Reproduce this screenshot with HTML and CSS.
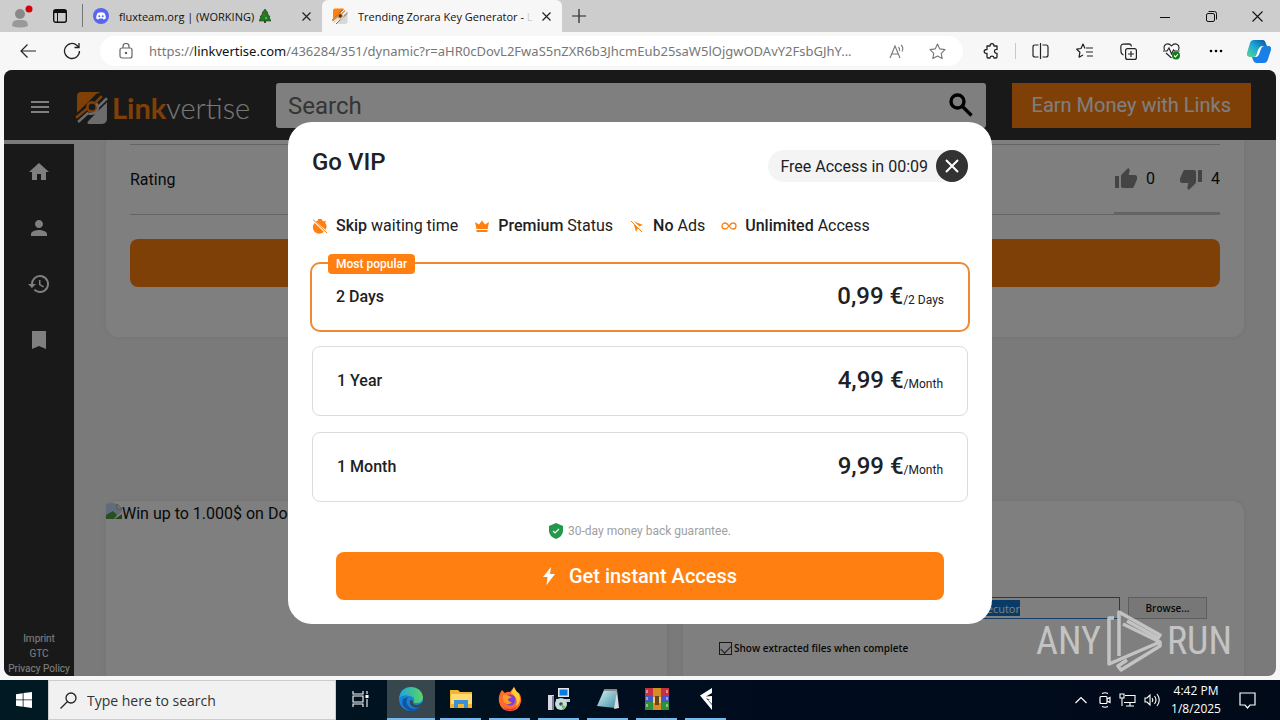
FILE: index.html
```html
<!DOCTYPE html>
<html lang="en">
<head>
<meta charset="utf-8">
<title>Trending Zorara Key Generator</title>
<link rel="stylesheet" href="styles.css">
</head>
<body>
<header class="tabs">
  <button class="profile" aria-label="Profile"><svg width="22" height="24" viewBox="0 0 22 24"><circle cx="8" cy="10" r="5" fill="#888"/><path d="M0 22q0-6 5-6h6q5 0 5 6-8 3-16 0z" fill="#999"/><circle cx="17" cy="5" r="3.500" fill="#d4000c"/></svg></button>
  <button class="actions" aria-label="Tab actions"><svg width="14" height="14" viewBox="0 0 14 14"><rect x=".7" y=".7" width="12.600" height="12.600" rx="2" fill="none" stroke="#111" stroke-width="1.400"/><path d="M1 1h12v3H5v9H4V4H1z" fill="#111"/></svg></button>
  <div class="tab">
    <svg width="16" height="16" viewBox="0 0 16 16"><circle cx="8" cy="8" r="8" fill="#5865f2"/><path d="M4.500 5q3.500-1.500 7 0 1.500 3 1.300 5.500-1.300 1-2.400 1l-.6-1H6.200l-.6 1q-1.100 0-2.400-1Q3 8 4.500 5z" fill="#fff"/><circle cx="6.300" cy="8.300" r="1" fill="#5865f2"/><circle cx="9.700" cy="8.300" r="1" fill="#5865f2"/></svg>
    <span class="tab-title">fluxteam.org | (WORKING)</span>
    <svg class="tree" width="12" height="14" viewBox="0 0 12 14"><path d="M6 0l3 4-1 0 3 4-1 0 2 4H0l2-4H1l3-4H3z" fill="#1d7a26" stroke="#103d12" stroke-width=".6"/><path d="M5 12h2v2H5z" fill="#633"/><circle cx="5" cy="6" r=".8" fill="#e33"/><circle cx="7" cy="9" r=".8" fill="#fd3"/></svg>
    <button class="close" aria-label="Close tab"><svg width="9" height="9" viewBox="0 0 9 9"><path d="M.5.5l8 8m0-8l-8 8" stroke="#222" stroke-width="1.200"/></svg></button>
  </div>
  <div class="tab active">
    <svg width="16" height="16" viewBox="0 0 32 32"><use href="#mark"/></svg>
    <span class="tab-title">Trending Zorara Key Generator - <i>L</i></span>
    <button class="close" aria-label="Close tab"><svg width="9" height="9" viewBox="0 0 9 9"><path d="M.5.5l8 8m0-8l-8 8" stroke="#222" stroke-width="1.200"/></svg></button>
  </div>
  <button class="new" aria-label="New tab"><svg width="14" height="14" viewBox="0 0 14 14"><path d="M7 0v14M0 7h14" stroke="#222" stroke-width="1.200"/></svg></button>
  <div class="window">
    <button aria-label="Minimize"><svg width="11" height="11"><path d="M0 6.500h10" stroke="#111"/></svg></button>
    <button aria-label="Restore"><svg width="11" height="11" viewBox="0 0 11 11" fill="none" stroke="#111"><rect x=".5" y="2.500" width="8" height="8" rx="1.500"/><path d="M2.500.5h6q2 0 2 2v6"/></svg></button>
    <button aria-label="Close"><svg width="11" height="11" viewBox="0 0 11 11"><path d="M.5.5l10 10m0-10l-10 10" stroke="#111" stroke-width="1.100"/></svg></button>
  </div>
</header>

<svg class="defs" width="0" height="0" aria-hidden="true">
  <symbol id="mark" viewBox="0 0 32 32">
    <path d="M6 1h18L2 21V5q0-4 4-4z" fill="#ff8011"/>
    <path d="M31 10v17q0 5-5 5H13q-2-1 0-3z" fill="#d8d8d8"/>
    <path d="M0 25L22 3" stroke="#333" stroke-width="2"/>
    <path d="M1 26L13 16M20 11l6-6" stroke="#ff8011" stroke-width="2.500"/>
    <path d="M3 30l10-9M21 17L31 7" stroke="#d8d8d8" stroke-width="2.500"/>
    <path d="M8 32L31 10" stroke="#333" stroke-width="1.500"/>
    <circle cx="16.500" cy="15.500" r="4.500" fill="#333" stroke="#ff8011" stroke-width="2.500"/>
    <path d="M13 22q7 1 9-4 1-3-1-6" fill="none" stroke="#d8d8d8" stroke-width="2.200"/>
  </symbol>
</svg>

<nav class="toolbar">
  <button aria-label="Back"><svg width="16" height="14" viewBox="0 0 16 14" fill="none" stroke="#222" stroke-width="1.200"><path d="M16 7H1M7.500.5L1 7l6.500 6.500"/></svg></button>
  <button aria-label="Refresh"><svg width="18" height="18" viewBox="0 0 18 18" fill="none" stroke="#222" stroke-width="1.300"><path d="M16.500 9A7.500 7.500 0 1 1 14 3.400L16 5.500M16 1v4.500h-4.500"/></svg></button>
  <div class="address">
    <svg width="14" height="16" viewBox="0 0 14 16" fill="none" stroke="#666" stroke-width="1.200"><rect x="1" y="5" width="12" height="10" rx="2"/><path d="M4 5V3.500a3 3 0 0 1 6 0V5"/><circle cx="7" cy="10" r=".7" fill="#666"/></svg>
    <span class="url">https://<b>linkvertise.com</b>/436284/351/dynamic?r=aHR0cDovL2FwaS5nZXR6b3JhcmEub25saW5lOjgwODAvY2FsbGJhY...</span>
    <button aria-label="Read aloud"><svg width="17" height="15" viewBox="0 0 17 15" fill="none" stroke="#777" stroke-width="1.100"><path d="M1 14L6 2l5 12M3 10h6M9.500 3q1.500 1.500.8 4M12 1q3 2.500 1 6.500"/></svg></button>
    <button aria-label="Favorite"><svg width="17" height="17" viewBox="0 0 17 17" fill="none" stroke="#777" stroke-width="1.100" stroke-linejoin="round"><path d="M8.500 1l2.300 4.900 5.200.7-3.800 3.700 1 5.300-4.700-2.600-4.700 2.600 1-5.300L1 6.600l5.200-.7z"/></svg></button>
  </div>
  <button class="ext" aria-label="Extensions"><svg width="17" height="17" viewBox="0 0 17 17" fill="none" stroke="#222" stroke-width="1.300" stroke-linejoin="round"><path d="M4 3h3q0-2.300 2-2.300T11 3h3v3.500q-2.500-.3-2.500 1.800t2.500 2V14q0 1-1 1h-2q-.3-1.800-2-1.800T7 15H5q-1 0-1-1v-3.500q-2.800 0-2.800-2T4 6.500z"/></svg></button>
  <span class="rule"></span>
  <button aria-label="Split screen"><svg width="17" height="16" viewBox="0 0 17 16" fill="none" stroke="#222" stroke-width="1.200"><path d="M6.500 2H3Q1 2 1 4v8q0 2 2 2h3.500M8.500 0v16M10.500 2H14q2 0 2 2v8q0 2-2 2h-3.500"/></svg></button>
  <button aria-label="Favorites list"><svg width="17" height="16" viewBox="0 0 17 16" fill="none" stroke="#222" stroke-width="1.200" stroke-linejoin="round"><path d="M9 5.500L7 1 5 5.500l-4.300.7 3.200 3-.8 5L7 12M10 5h7M10 9h7M11 13h6"/></svg></button>
  <button aria-label="Collections"><svg width="17" height="17" viewBox="0 0 17 17" fill="none" stroke="#222" stroke-width="1.200"><rect x="5.600" y="5.600" width="10.800" height="10.800" rx="2"/><path d="M11 8v6M8 11h6M3.500 12Q1 11 1 8.500L.8 3.500Q1 1.500 3 1.200L9 .8q2 0 2.500 2.500"/></svg></button>
  <button aria-label="Browser essentials"><svg width="18" height="17" viewBox="0 0 18 17" fill="none" stroke="#222" stroke-width="1.100"><path d="M1.500 7Q0 3 3 1.300 6 0 8.500 3 11 0 14 1.300q3 1.700 1.500 5.700M0 8h4l2-3 2.500 6 2-4 1 1h5M3 10l5.500 5"/><circle cx="13" cy="12.500" r="4" fill="#127a1a" stroke="none"/><path d="M11 12.500l1.500 1.500 2.500-3" stroke="#fff"/></svg></button>
  <button aria-label="Settings"><svg width="14" height="4"><circle cx="2" cy="2" r="1.300"/><circle cx="7" cy="2" r="1.300"/><circle cx="12" cy="2" r="1.300"/></svg></button>
  <button class="copilot" aria-label="Copilot"><svg width="24" height="23" viewBox="0 0 24 23"><defs><linearGradient id="c1" x1="0" y1="1" x2="1" y2="0"><stop stop-color="#61d58c"/><stop offset=".5" stop-color="#1aa8d8"/><stop offset="1" stop-color="#0a4f9c"/></linearGradient><linearGradient id="c2" x1="0" y1="1" x2="1" y2="0"><stop stop-color="#1b7ff0"/><stop offset="1" stop-color="#1a7fe0"/></linearGradient></defs><path d="M7 0h9q2 0 3 4l1 2h-5q-2 0-3 3l-2 5q-1 3-4 3H3q-4 0-3-4L3 3q1-3 4-3z" fill="url(#c1)"/><path d="M17 6h4q4 0 3 4l-3 9q-1 4-4 4H9q-2 0-3-3l-1-3h3q3 0 4-3l2-5q1-3 3-3z" fill="url(#c2)"/><path d="M14 7l-2 7q-1 3-3 3l2-7q1-3 3-3z" fill="#fff"/></svg></button>
</nav>

<div class="frame">
<div class="site">
  <header class="site-head">
    <button class="menu" aria-label="Menu"><svg width="18" height="12" viewBox="0 0 18 12"><path d="M0 1h18M0 6h18M0 11h18" stroke="#fff" stroke-width="2"/></svg></button>
    <a class="logo" href="#"><svg width="33" height="33" viewBox="0 0 32 32"><use href="#mark"/></svg><span><b>Link</b>vertise</span></a>
    <form class="search"><input type="text" placeholder="Search" aria-label="Search"><button type="button" aria-label="Search"><svg width="24" height="24" viewBox="0 0 24 24" fill="none" stroke="#000" stroke-width="3.400"><circle cx="8.500" cy="8.500" r="6.500"/><path d="M13 13l9.500 9.500"/></svg></button></form>
    <button class="earn">Earn Money with Links</button>
  </header>
  <div class="site-body">
    <aside class="side">
      <a href="#" aria-label="Home"><svg viewBox="0 0 24 24"><path d="M10 20v-6h4v6h5v-8h3L12 3 2 12h3v8z"/></svg></a>
      <a href="#" aria-label="Account"><svg viewBox="0 0 24 24"><path d="M12 12c2.210 0 4-1.790 4-4s-1.790-4-4-4-4 1.790-4 4 1.790 4 4 4zm0 2c-2.670 0-8 1.340-8 4v2h16v-2c0-2.660-5.330-4-8-4z"/></svg></a>
      <a href="#" aria-label="History"><svg viewBox="0 0 24 24"><path d="M13 3a9 9 0 0 0-9 9H1l3.890 3.890.07.14L9 12H6a7 7 0 1 1 2.060 4.940l-1.420 1.420A9 9 0 1 0 13 3zm-1 5v5l4.280 2.540.72-1.210-3.500-2.080V8z"/></svg></a>
      <a href="#" aria-label="Bookmarks"><svg viewBox="0 0 24 24"><path d="M5 3h14v18l-7-3-7 3z"/></svg></a>
      <div class="legal"><a href="#">Imprint</a><a href="#">GTC</a><a href="#">Privacy Policy</a></div>
    </aside>
    <main class="main">
      <section class="card rating-card">
        <div class="rating"><span>Rating</span>
          <div class="votes">
            <button><svg viewBox="0 0 24 24"><path d="M1 21h4V9H1v12zm22-11c0-1.100-.9-2-2-2h-6.310l.95-4.570.03-.32c0-.41-.17-.79-.44-1.060L14.170 1 7.590 7.590C7.220 7.950 7 8.450 7 9v10c0 1.100.9 2 2 2h9c.83 0 1.540-.5 1.840-1.220l3.020-7.050c.09-.23.14-.47.14-.73v-2z"/></svg>0</button>
            <button><svg viewBox="0 0 24 24"><path d="M15 3H6c-.83 0-1.540.5-1.840 1.220l-3.020 7.050c-.09.23-.14.47-.14.73v2c0 1.100.9 2 2 2h6.310l-.95 4.570-.03.32c0 .41.17.79.44 1.060L9.830 23l6.590-6.590c.36-.36.58-.86.58-1.410V5c0-1.100-.9-2-2-2zm4 0v12h4V3h-4z"/></svg>4</button>
          </div>
        </div>
        <button class="wide" aria-label="Continue"></button>
      </section>
      <div class="ads">
        <section class="card ad"><svg width="16" height="16" viewBox="0 0 16 16"><path d="M0 1q6-2 11 0l5 5v3l-4 3-4 4H0z" fill="#c3d9f5"/><path d="M0 12l7-4 4 4-3 4H0z" fill="#4ea03c"/><path d="M11 1v5h5z" fill="#eee" stroke="#888" stroke-width=".6"/><path d="M9 16l7-5v5z" fill="#3a9134"/></svg><span>Win up to 1.000$ on Do</span></section>
        <section class="card extract">
          <div class="path"><div class="path-box"><input type="text" value="Zorara Executor" aria-label="Destination"></div><button>Browse...</button></div>
          <label class="check"><input type="checkbox" checked><span>Show extracted files when complete</span></label>
        </section>
      </div>
    </main>
  </div>

  <div class="overlay">
    <div class="modal" role="dialog" aria-labelledby="vip">
      <div class="modal-head"><h1 id="vip">Go VIP</h1>
        <div class="timer"><span>Free Access in 00:09</span><button aria-label="Close"><svg width="14" height="14" viewBox="0 0 14 14"><path d="M1 1l12 12M13 1L1 13" stroke="#fff" stroke-width="2"/></svg></button></div>
      </div>
      <ul class="perks">
        <li><svg viewBox="0 0 16 16"><path d="M6 1h4v1.500H6zM3.800 3.600a6 6 0 0 1 8.400 0l1-1 .8.900-1 1a6 6 0 0 1 .5 7.200zM2.600 5a6 6 0 0 0 9.200 8.800z"/><path d="M1 1.500L15 15" stroke="#ff8011"/></svg><span><b>Skip</b> waiting time</span></li>
        <li><svg viewBox="0 0 16 16"><path d="M1 4l4 2.500L8 2.500l3 4L15 4l-1.300 7H2.500zM2.500 12h11v2h-11z"/></svg><span><b>Premium</b> Status</span></li>
        <li><svg viewBox="0 0 16 16"><path d="M4 3l10 4-4 1.500 3 3-1 1-3-2.500L7 14z"/><path d="M2 2l12 11" stroke="#fff" stroke-width="2"/><path d="M2 3l11 11" stroke="#ff8011"/></svg><span><b>No</b> Ads</span></li>
        <li><svg viewBox="0 0 16 16" fill="none" stroke="#ff8011" stroke-width="1.300"><path d="M8 8Q6 5 4 5a3 3 0 0 0 0 6q2 0 4-3t4-3a3 3 0 0 1 0 6q-2 0-4-3z"/></svg><span><b>Unlimited</b> Access</span></li>
      </ul>
      <div class="plans">
        <button class="plan popular"><em>Most popular</em><span>2 Days</span><span class="price"><strong>0,99 €</strong>/2 Days</span></button>
        <button class="plan"><span>1 Year</span><span class="price"><strong>4,99 €</strong>/Month</span></button>
        <button class="plan"><span>1 Month</span><span class="price"><strong>9,99 €</strong>/Month</span></button>
      </div>
      <p class="guarantee"><svg width="14" height="16" viewBox="0 0 14 16"><path d="M7 0l7 3v5q0 5-7 8-7-3-7-8V3z" fill="#23984b"/><path d="M4 8l2 2 4-4" fill="none" stroke="#fff" stroke-width="1.200"/></svg>30-day money back guarantee.</p>
      <button class="get"><svg width="12" height="18" viewBox="0 0 12 18"><path d="M8 0L0 10h4.500L3.500 18 12 7H7z" fill="#fff"/></svg>Get instant Access</button>
    </div>
  </div>

  <div class="watermark"><span>ANY</span><svg width="56" height="62" viewBox="0 0 56 62" fill="none" stroke="#d0d0d0" stroke-width="3.500" stroke-linejoin="round"><path d="M13 46V2l41 23-2 3-31-17"/><path d="M8 8H3v46l51-22-37-18M54 32v4L15 60l-3-4 9-6"/></svg><span>RUN</span></div>
</div>
</div>

<footer class="taskbar">
  <button class="start" aria-label="Start"><svg width="16" height="16" viewBox="0 0 16 16" fill="#fff"><path d="M0 2.200L6.700 1.200V7.500H0zM7.500 1.100L16 0v7.500H7.500zM0 8.300h6.700v6.400L0 13.800zM7.500 8.300H16V16l-8.500-1.200z"/></svg></button>
  <label class="find"><svg width="17" height="17" viewBox="0 0 17 17" fill="none" stroke="#222" stroke-width="1.300"><circle cx="11" cy="6" r="5"/><path d="M7.500 9.500L.5 16.500"/></svg><input type="text" placeholder="Type here to search" aria-label="Type here to search"></label>
  <button class="task view" aria-label="Task view"><svg width="17" height="16" viewBox="0 0 17 16" fill="none" stroke="#fff" stroke-width="1.100"><path d="M1 0v3h10V0M1 16v-3h10v3M1 5h10v6H1zM15 0v3M15 8v8"/><path d="M13.500 4h3v3h-3z" fill="#fff" stroke="none"/></svg></button>
  <button class="task on" aria-label="Edge"><svg width="24" height="24" viewBox="0 0 24 24"><defs><linearGradient id="e1"><stop stop-color="#1da5df"/><stop offset="1" stop-color="#5bd65f"/></linearGradient></defs><circle cx="12" cy="12" r="12" fill="#1683d8"/><path d="M0 11Q2 0 12 0t12 10q0 6-7 6-3 0-2-2 1-4-4-5-7-2-11 2z" fill="url(#e1)"/><path d="M9 10q-4 7 3 11 5 2 10-2-4 6-11 5Q1 20 4 12z" fill="#1255a4"/><path d="M14 14q-1 4 4 4 3 0 6-3l-1 4q-5 3-9 1-4-2-3-7z" fill="#37474d"/></svg></button>
  <button class="task run" aria-label="File Explorer"><svg width="22" height="20" viewBox="0 0 22 20"><path d="M0 1h8l2 2h12v16H0z" fill="#f1b52f"/><path d="M1 5h21v10H1z" fill="#ffdc72"/><path d="M4 11h14v8h-4v-4H8v4H4z" fill="#3b91d4"/></svg></button>
  <button class="task run" aria-label="Firefox"><svg width="24" height="24" viewBox="0 0 24 24"><path d="M4 3l3 3q3-2 5-1l4-5q2 5 5 6 3 4 2 9-2 9-11 9T1 15Q0 8 4 3z" fill="#ff6a2b"/><path d="M16 0q2 5 5 7 3 8-3 12 3-9-5-13z" fill="#ffcf35"/><path d="M3 17q5 8 16 3-4 5-11 3z" fill="#f0265b"/><circle cx="12" cy="13" r="5.500" fill="#7543d9"/><path d="M5 8q3-1 6 1l3 1-4 2q0 3 4 3-3 4-7 1-3-3-2-8z" fill="#ff9a24"/></svg></button>
  <button class="task run" aria-label="Installer"><svg width="22" height="24" viewBox="0 0 22 24"><rect x="10" y="1" width="11" height="9" fill="#dfe6ee"/><rect x="11.500" y="2.500" width="8" height="6" fill="#087ae0"/><path d="M8 12h14v3H8z" fill="#ccc"/><path d="M0 8h6v15H0z" fill="#d8d8e2"/><path d="M4 9h2v14H4z" fill="#7e7e9a"/><circle cx="13" cy="17" r="6" fill="#c6ded8"/><circle cx="13" cy="17" r="1.800" fill="#345"/><path d="M13 17l5 3-3 3z" fill="#6dbf66"/></svg></button>
  <button class="task run" aria-label="Notepad"><svg width="24" height="22" viewBox="0 0 24 22"><defs><linearGradient id="n1" x1="0" y1="0" x2="1" y2="1"><stop stop-color="#d8f2f5"/><stop offset="1" stop-color="#3f92a6"/></linearGradient></defs><path d="M8 2l13 0-2 18L1 18z" fill="url(#n1)"/><path d="M21 2l2 18-5 1z" fill="#dcdcdc"/><path d="M8 2h13" stroke="#888" stroke-width="2"/></svg></button>
  <button class="task run" aria-label="WinRAR"><svg width="24" height="22" viewBox="0 0 24 22"><path d="M0 0h24v7H0z" fill="#c6303f"/><path d="M0 7h24v7H0z" fill="#4856c4"/><path d="M0 14h24v8H0z" fill="#2f8f3a"/><path d="M2 2v18M22 2v18" stroke="#eee" stroke-width="1" stroke-dasharray="3 4"/><path d="M8 0h8v22H8z" fill="#d58b28"/><path d="M8 9h8v6H8z" fill="#eecb72"/><path d="M10 8h4v9h-4z" fill="#6a4319"/></svg></button>
  <button class="task run" aria-label="Fluxus"><svg width="12" height="24" viewBox="0 0 12 24" fill="#fff"><path d="M12 1v5L6 9.500 12 9v4l-3-.5-3-1.500 6 7v5L0 8.500z"/><path d="M12 12v5l-4-4z"/></svg></button>
  <div class="tray">
    <svg width="12" height="8" viewBox="0 0 12 8" fill="none" stroke="#fff" stroke-width="1.200"><path d="M.5 7L6 1.500 11.500 7"/></svg>
    <svg width="12" height="16" viewBox="0 0 12 16" fill="none" stroke="#fff" stroke-width="1.200"><rect x="1" y="4.500" width="7" height="7" rx="1"/><path d="M8 7l3-1.500v5L8 9M3 1.500q3-1.500 6 0M3 14.500q3 1.500 6 0"/></svg>
    <svg width="17" height="14" viewBox="0 0 17 14" fill="none" stroke="#fff" stroke-width="1.100"><path d="M6 2.500h10v7H5M11 10v3M7 13h8M1 1h4v4H1zM3 5v8"/></svg>
    <svg width="17" height="14" viewBox="0 0 17 14" fill="none" stroke="#fff" stroke-width="1.100"><path d="M1 5h2l3-3v10L3 9H1zM8 5q1.500 2 0 4M10.500 3q3 4 0 8M13 1q4.500 6 0 12"/></svg>
    <div class="clock"><span>4:42 PM</span><span>1/8/2025</span></div>
    <svg width="17" height="17" viewBox="0 0 17 17" fill="none" stroke="#fff" stroke-width="1.200"><path d="M1 1h15v12h-5l-2.500 3L6 13H1z"/></svg>
  </div>
</footer>
</body>
</html>
```

FILE: styles.css
```css
* { box-sizing: border-box; }
body { margin: 0; height: 100vh; display: flex; flex-direction: column; overflow: hidden; background: #f7f7f7; font-family: "Open Sans", sans-serif; color: #222; }
button { padding: 0; border: 0; background: none; font: inherit; color: inherit; display: flex; align-items: center; justify-content: center; }
a { color: inherit; text-decoration: none; }
input { min-width: 0; padding: 0; border: 0; outline: 0; background: none; font: inherit; color: inherit; }
svg { flex: none; }
.defs { display: block; position: absolute; }

.tabs { display: flex; align-items: stretch; height: 32px; background: #cdcdcd; flex: none; }
.profile { width: 40px; padding-left: 6px; }
.actions { width: 40px; }
.tab { display: flex; align-items: center; width: 240px; padding: 0 10px; font-size: 11px; white-space: nowrap; color: #111; border-left: 1px solid #777; }
.tab:not(.active) { border-image: linear-gradient(#cdcdcd 5px, #777 5px, #777 26px, #cdcdcd 26px) 1; margin-left: 2px; }
.tab-title { margin-left: 10px; }
.tab-title i { color: #ccc; font-style: normal; }
.tree { margin-left: 5px; }
.tab .close { margin-left: auto; width: 12px; }
.tab.active { background: #f7f7f7; border: 0; border-radius: 6px 6px 0 0; }
.new { width: 34px; }
.window { display: flex; margin-left: auto; }
.window button { width: 46px; }

.toolbar { display: flex; align-items: center; height: 38px; flex: none; }
.toolbar > button { width: 44px; height: 30px; flex: none; }
.toolbar > button:first-child { margin-left: 6px; }
.toolbar > .copilot { width: 42px; }
.address { flex: 1; min-width: 0; display: flex; align-items: center; height: 30px; margin: 0 6px; padding: 0 6px 0 19px; border-radius: 15px; background: #fff; }
.url { flex: 1; margin: 0 0 0 16px; font-family: "Noto Sans", sans-serif; font-size: 13px; color: #777; white-space: nowrap; }
.url b { font-weight: 400; color: #111; }
.address button { width: 40px; height: 30px; flex: none; }
.rule { width: 1px; height: 16px; margin: 0 2px; background: #c8c8c8; }

.frame { flex: 1; min-height: 0; padding: 0 4px 4px; display: flex; }
.site { position: relative; flex: 1; display: flex; flex-direction: column; overflow: hidden; border-radius: 8px; background: #f4f4f4; font-family: Roboto, sans-serif; font-size: 16px; color: #111; }
.site-head { display: flex; align-items: center; height: 70px; padding: 0 25px 0 27px; background: #333; flex: none; }
.menu { width: 18px; height: 32px; padding-top: 4px; }
.logo { display: flex; align-items: center; gap: 4px; margin: 0 25px 0 26px; padding-top: 4px; font: 300 29px Lato, sans-serif; color: #eee; width: 176px; }
.logo b { font-weight: 700; color: #ff8011; }
.search { flex: 1; display: flex; height: 45px; padding: 0 13px 0 12px; border-radius: 3px; background: #fff; }
.search input { flex: 1; padding-top: 1px; font-size: 24px; }
.search input::placeholder { color: #6a6a6a; opacity: 1; }
.earn { height: 45px; margin-left: 26px; padding: 0 20px; background: #ff8011; color: #fff; font-size: 20px; }
.site-body { flex: 1; min-height: 0; display: flex; }
.side { width: 70px; margin-top: 4px; display: flex; flex-direction: column; background: #333; color: #fff; }
.side > a { display: flex; align-items: center; justify-content: center; height: 56px; }
.side > a svg { width: 24px; height: 24px; fill: #fff; }
.legal { display: flex; flex-direction: column; margin-top: auto; text-align: center; font-size: 10px; line-height: 15px; }
.main { flex: 1; min-width: 0; padding: 0 32px; overflow: hidden; }
.card { background: #fff; border-radius: 12px; box-shadow: 0 0 4px #e4e4e4; }
.rating-card { padding: 4px 24px 50px; border-radius: 0 0 12px 12px; margin-bottom: 164px; }
.rating { display: flex; justify-content: space-between; border-top: 1px solid #c8c8c8; border-bottom: 1px solid #c8c8c8; height: 71px; margin-bottom: 24px; }
.rating > span { align-self: center; }
.votes { display: flex; gap: 24px; border-bottom: 2px solid #c8c8c8; }
.votes button { gap: 8px; }
.votes svg { width: 24px; height: 24px; fill: #888; }
.wide { width: 100%; height: 48px; border-radius: 8px; background: #ff8011; }
.ads { display: grid; grid-template-columns: 1fr 1fr; gap: 16px; }
.ad { display: flex; height: 260px; align-items: flex-start; line-height: 26px; }
.ad svg { margin-top: 2px; }
.extract { padding: 96px 37px 0 36px; font: 10px "Open Sans", sans-serif; }
.path { display: flex; gap: 8px; height: 22px; }
.path-box { flex: 1; display: flex; align-items: center; border: 1px solid #2a7fc8; }
.path-box input { width: 300px; height: 16px; background: #1277d0; color: #fff; font-size: 11px; text-align: right; }
.path button { width: 79px; background: #eee; border: 1px solid #bbb; font-size: 10px; font-weight: 600; }
.check { display: flex; align-items: center; gap: 2px; margin-top: 19px; line-height: 20px; font-weight: 600; }
.check input { display: flex; justify-content: center; width: 13px; height: 13px; margin: 0; appearance: none; border: 1px solid #333; }
.check input::before { content: ""; width: 5px; height: 9px; border: solid #333; border-width: 0 1px 1px 0; transform: rotate(45deg); }

.overlay { position: absolute; inset: 0; display: flex; align-items: center; justify-content: center; background: rgba(0, 0, 0, .5); }
.modal { width: 704px; padding: 24px; border-radius: 24px; background: #fff; color: #202124; }
.modal-head { display: flex; justify-content: space-between; align-items: flex-start; }
.modal h1 { margin: 0; font-size: 24px; line-height: 32px; font-weight: 500; }
.timer { display: flex; align-items: center; gap: 8px; margin-top: 4px; padding-left: 12px; border-radius: 16px; background: #f4f4f4; }
.modal b { font-weight: 500; }
.timer button { width: 32px; height: 32px; border-radius: 50%; background: #333; }
.perks { display: flex; gap: 16px; margin: 32px 0 24px; padding: 0; list-style: none; line-height: 24px; }
.perks li { display: flex; align-items: center; gap: 8px; }
.perks svg { width: 16px; height: 16px; }
.perks svg:not([fill]) { fill: #ff8011; }
.plans { display: grid; gap: 16px; }
.plan { position: relative; justify-content: space-between; height: 70px; padding: 0 24px 2px; border: 1px solid #dcdcdc; border-radius: 8px; font-weight: 500; }
.popular { margin: 0 -2px -2px; border: 2px solid #ee8a32; border-radius: 10px; }
.popular em { position: absolute; left: 16px; top: -10px; padding: 0 8px; border-radius: 4px; background: #ff8011; color: #fff; font: 500 12px/20px Roboto, sans-serif; }
.price { font-size: 12px; font-weight: 400; }
.price strong { font-size: 24px; font-weight: 500; }
.guarantee { display: flex; justify-content: center; align-items: center; gap: 5px; margin: 20px 0 12px; font-size: 12px; line-height: 18px; color: #a0a0a0; }
.get { width: calc(100% - 48px); height: 48px; margin: 0 24px; gap: 14px; border-radius: 8px; background: #ff8011; color: #fff; font-size: 20px; font-weight: 500; }

.watermark { position: absolute; right: 44px; bottom: 4px; display: flex; align-items: center; gap: 5px; color: #d0d0d0; font: 38px "Liberation Sans Narrow", "Roboto Condensed", "DejaVu Sans Condensed", sans-serif; opacity: .85; }

.taskbar { display: flex; height: 40px; flex: none; background: linear-gradient(90deg, #001a23, #000c1e 60%, #000a18); color: #fff; }
.start { width: 48px; }
.find { width: 288px; display: flex; align-items: center; gap: 10px; padding-left: 11px; background: #f1f1f1; border: 1px solid #ccc; color: #333; }
.find input { flex: 1; font-size: 14px; }
.find input::placeholder { color: #333; opacity: 1; }
.task { width: 49px; border-bottom: 2px solid transparent; }
.task.view { width: 50px; padding-right: 2px; }
.task.on { width: 48px; margin: 0 1px; background: #37474d; border-color: #76b9ed; }
.task.run { width: 41px; margin: 0 4px; border-color: #76b9ed; }
.tray { margin-left: auto; display: flex; align-items: center; gap: 8px; padding-right: 24px; }
.tray > svg:first-child { margin-right: 4px; }
.clock { display: flex; flex-direction: column; align-items: center; width: 54px; margin: 0 8px 0 0; font-size: 12px; line-height: 18px; white-space: nowrap; }
```
